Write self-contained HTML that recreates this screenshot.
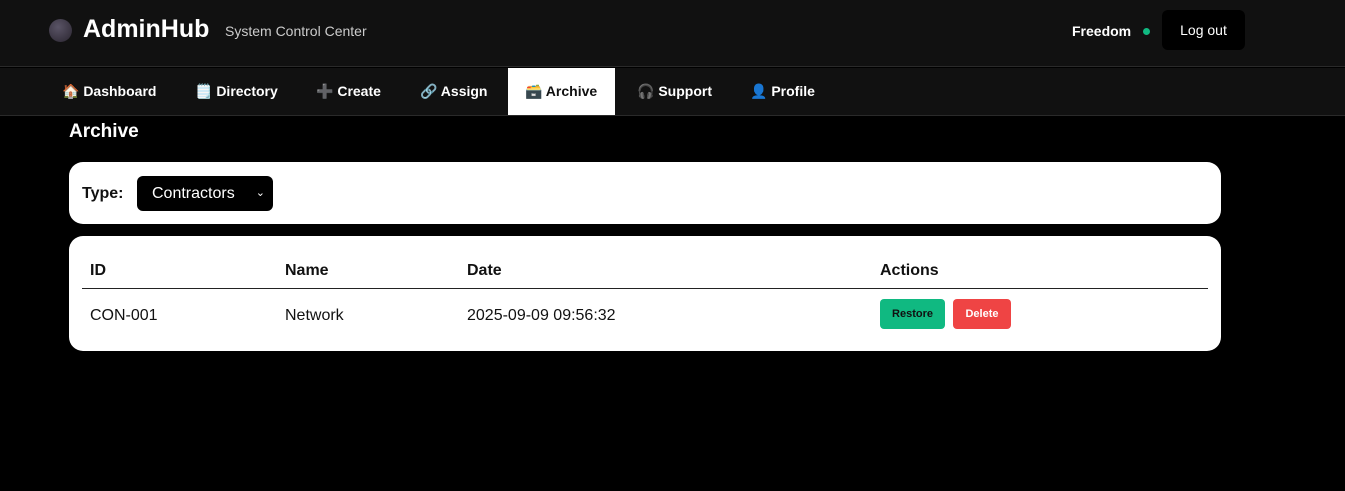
<!DOCTYPE html>
<html><head><style>
*{box-sizing:border-box;margin:0;padding:0}
body{width:1345px;height:491px;background:#000;font-family:"Liberation Sans",Arial,sans-serif;color:#fff;overflow:hidden;position:relative}
.hdr{position:absolute;left:0;top:0;width:1345px;height:67px;background:#111;border-bottom:1px solid #2a2a2a}
.logo{position:absolute;left:49px;top:19px;width:23px;height:23px;border-radius:50%;background:radial-gradient(circle at 40% 35%,#5a5466,#2a2530)}
.brand{position:absolute;left:83px;top:15px;font-size:25px;font-weight:bold;letter-spacing:0}
.sub{position:absolute;left:225px;top:23px;font-size:14px;color:#ccc}
.user{position:absolute;left:1072px;top:23px;font-size:14px;font-weight:bold}
.dot{position:absolute;left:1143px;top:28px;width:7px;height:7px;border-radius:50%;background:#10b981}
.lo{position:absolute;left:1162px;top:10px;width:83px;height:40px;background:#000;border-radius:6px;font-size:14px;text-align:center;line-height:41px}
.nav{position:absolute;left:0;top:68px;width:1345px;height:48px;background:#111;border-bottom:1px solid #2a2a2a}
.nav span{position:absolute;top:0;height:47px;line-height:46px;font-size:14px;font-weight:bold;padding:0 0}
.act{background:#fff;color:#111}
h1{position:absolute;left:69px;top:121px;font-size:19px;font-weight:bold}
.card{position:absolute;left:69px;width:1152px;background:#fff;border-radius:14px;color:#111}
.sel{position:absolute;left:68px;top:14px;width:136px;height:35px;background:#000;border-radius:6px;color:#fff;font-size:16px;line-height:35px;padding-left:15px}
table{position:absolute;left:13px;top:18px;width:1126px;border-collapse:collapse;font-size:16px}
th{text-align:left;font-weight:bold;height:34px;border-bottom:1px solid #222;padding-left:8px}
td{height:52px;padding-left:8px;padding-top:4px;vertical-align:middle}
.b{display:inline-block;height:30px;line-height:30px;border-radius:4px;font-size:11px;font-weight:bold;padding:0 11px;vertical-align:middle}
</style></head><body>
<div class="hdr">
<div class="logo"></div><div class="brand">AdminHub</div><div class="sub">System Control Center</div>
<div class="user">Freedom</div><div class="dot"></div><div class="lo">Log out</div>
</div>
<div class="nav">
<span style="left:62px">🏠 Dashboard</span>
<span style="left:195px">🗒️ Directory</span>
<span style="left:316px"><b style="color:#8b5cf6">➕</b> Create</span>
<span style="left:420px">🔗 Assign</span>
<span class="act" style="left:508px;width:107px;padding-left:17px">🗃️ Archive</span>
<span style="left:637px">🎧 Support</span>
<span style="left:750px">👤 Profile</span>
</div>
<h1>Archive</h1>
<div class="card" style="top:162px;height:62px">
<div style="position:absolute;left:13px;top:23px;font-size:16px;font-weight:bold">Type:</div>
<div class="sel">Contractors<span style="position:absolute;right:8px;font-size:11px">&#8964;</span></div>
</div>
<div class="card" style="top:236px;height:115px">
<table>
<tr><th style="width:195px">ID</th><th style="width:182px">Name</th><th style="width:413px">Date</th><th>Actions</th></tr>
<tr><td>CON-001</td><td>Network</td><td>2025-09-09 09:56:32</td><td style="padding-top:0"><span class="b" style="background:#10b981;color:#111;width:65px;text-align:center;padding:0">Restore</span><span class="b" style="background:#ef4444;color:#fff;margin-left:8px;width:58px;text-align:center;padding:0">Delete</span></td></tr>
</table>
</div>
</body></html>
